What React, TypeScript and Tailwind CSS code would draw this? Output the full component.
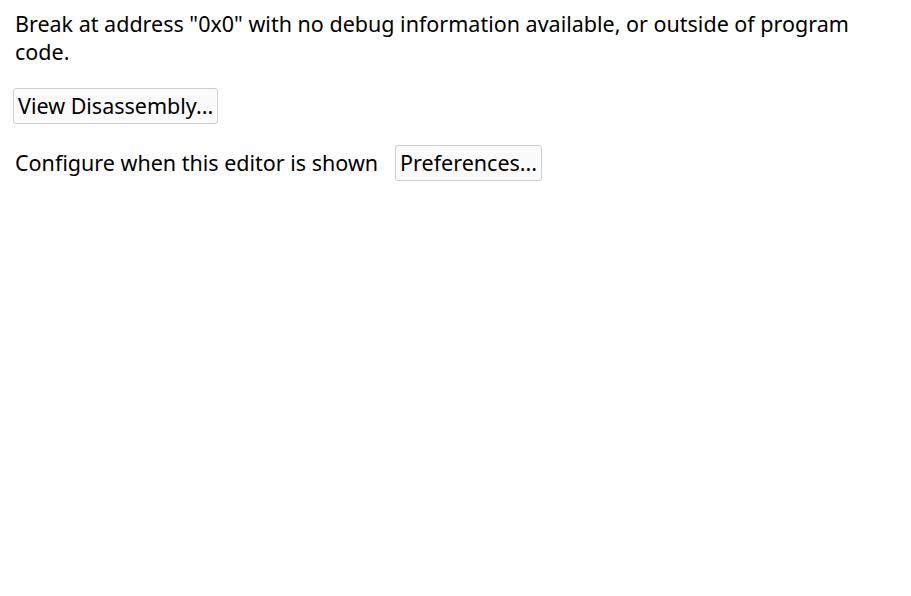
import React from 'react';

const font = { fontFamily: '"Noto Sans", "Open Sans", sans-serif' };

const Btn = ({ children }: { children: React.ReactNode }) => (
  <button className="h-[36px] px-[4px] border border-[#cfcfcf] rounded-[3px] bg-[#fbfbfb] text-[21.5px] leading-[26px] text-black">
    {children}
  </button>
);

export default function App() {
  return (
    <div className="min-h-screen bg-white text-black text-[21.5px] leading-[28px] px-[15px] pt-[10px]" style={font}>
      <p>
        Break at address "0x0" with no debug information available, or outside of program code.
      </p>
      <div className="mt-[22px] -ml-[2px]">
        <Btn>View Disassembly...</Btn>
      </div>
      <div className="mt-[21px] flex items-center gap-[17px]">
        <span>Configure when this editor is shown</span>
        <Btn>Preferences...</Btn>
      </div>
    </div>
  );
}
